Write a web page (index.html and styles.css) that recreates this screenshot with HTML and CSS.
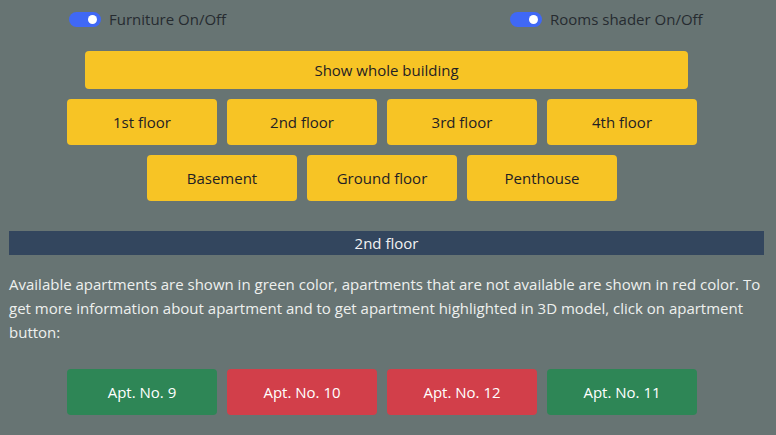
FILE: index.html
```html
<!DOCTYPE html>
<html>
<head>
<meta charset="utf-8">
<link rel="stylesheet" href="styles.css">
</head>
<body>
<div class="page">
  <div class="toggles">
    <label class="toggle"><span class="switch"><span class="knob"></span></span><span class="tlabel">Furniture On/Off</span></label>
    <label class="toggle"><span class="switch"><span class="knob"></span></span><span class="tlabel">Rooms shader On/Off</span></label>
  </div>
  <button class="btn yellow whole">Show whole building</button>
  <div class="row first">
    <button class="btn yellow">1st floor</button>
    <button class="btn yellow">2nd floor</button>
    <button class="btn yellow">3rd floor</button>
    <button class="btn yellow">4th floor</button>
  </div>
  <div class="row second">
    <button class="btn yellow">Basement</button>
    <button class="btn yellow">Ground floor</button>
    <button class="btn yellow">Penthouse</button>
  </div>
  <div class="bar">2nd floor</div>
  <p class="info">Available apartments are shown in green color, apartments that are not available are shown in red color. To get more information about apartment and to get apartment highlighted in 3D model, click on apartment button:</p>
  <div class="row apts">
    <button class="btn green">Apt. No. 9</button>
    <button class="btn red">Apt. No. 10</button>
    <button class="btn red">Apt. No. 12</button>
    <button class="btn green">Apt. No. 11</button>
  </div>
</div>
</body>
</html>
```
FILE: styles.css
```css
html, body {
  margin: 0;
  padding: 0;
  background: #677473;
  font-family: "Open Sans", "Noto Sans", sans-serif;
  font-size: 15px;
}
.page {
  width: 764px;
}
.toggles {
  display: flex;
  align-items: center;
  height: 38px;
  padding-left: 69px;
}
.toggle {
  flex: none;
  display: flex;
  align-items: center;
  gap: 8px;
  width: 441px;
  color: #262b30;
  font-size: 15px;
}
.toggle + .toggle {
  width: auto;
}
.switch {
  position: relative;
  width: 32px;
  height: 15px;
  border-radius: 8px;
  background: #4068f5;
}
.knob {
  position: absolute;
  right: 4px;
  top: 3px;
  width: 9px;
  height: 9px;
  border-radius: 50%;
  background: #fff;
}
.btn {
  font-family: inherit;
  font-size: 15px;
  border: none;
  border-radius: 4px;
  width: 150px;
  height: 46px;
  padding: 0;
  cursor: pointer;
}
.yellow {
  background: #f7c425;
  color: #1f2124;
}
.green {
  background: #2e8656;
  color: #fff;
}
.red {
  background: #d23f4a;
  color: #fff;
}
.whole {
  display: block;
  margin: 13px 0 0 85px;
  width: 603px;
  height: 38px;
}
.row {
  display: flex;
  justify-content: center;
  gap: 10px;
}
.row.first {
  margin-top: 10px;
}
.row.second {
  margin-top: 10px;
}
.bar {
  margin: 30px 0 0 9px;
  width: 755px;
  height: 24px;
  line-height: 24px;
  background: #33465e;
  color: #f2f2f2;
  text-align: center;
}
.info {
  margin: 17px 0 0 9px;
  width: 757px;
  line-height: 24px;
  color: #eef0ee;
}
.row.apts {
  margin-top: 25px;
}
```
